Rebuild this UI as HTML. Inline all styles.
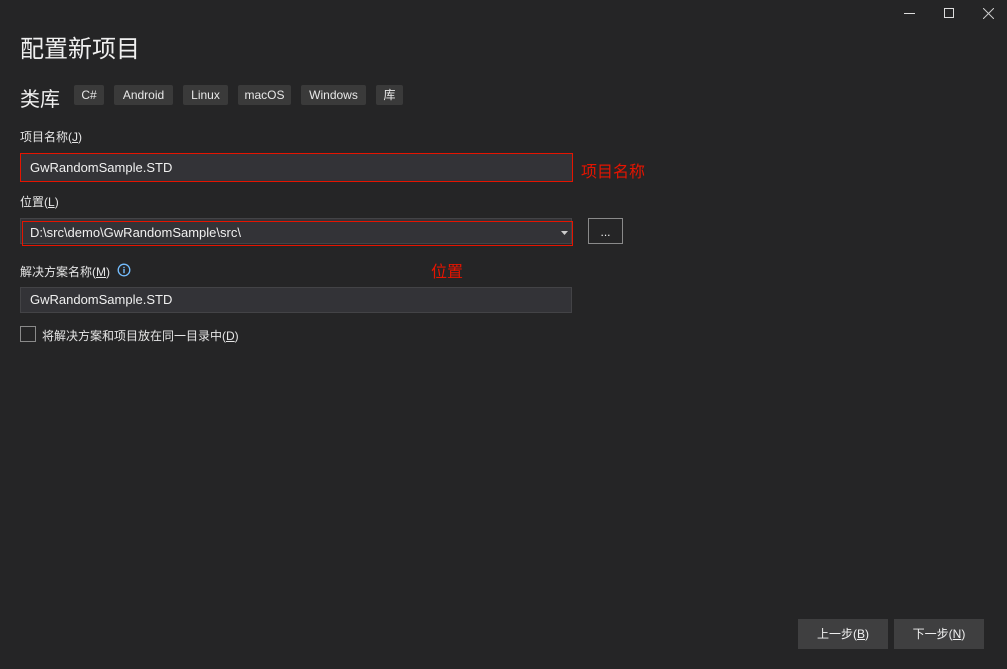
<!DOCTYPE html>
<html><head><meta charset="utf-8"><style>
*{margin:0;padding:0;box-sizing:border-box}
body{width:1007px;height:669px;background:#252526;position:relative;overflow:hidden;font-family:"Liberation Sans","Noto Sans CJK SC",sans-serif;color:#e6e6e6;font-size:12px}
.a{position:absolute}
.tag{position:absolute;top:85px;height:20px;background:#3a3a3a;border-radius:2px;font-size:12px;line-height:20px;text-align:center;color:#e8e8e8}
.inp{position:absolute;background:#333337;border:1px solid #434346;font-size:13px;color:#f0f0f0;padding-left:9px}
.red{border:1px solid #e51400}
.btn{position:absolute;top:619px;height:30px;background:#3f3f40;font-size:12px;line-height:30px;text-align:center;color:#f0f0f0}
u{text-decoration:underline}
</style></head><body>
<div class="a" style="left:904px;top:13px;width:11px;height:1px;background:#ddd"></div>
<div class="a" style="left:944px;top:8px;width:10px;height:10px;border:1px solid #ddd"></div>
<svg class="a" style="left:983px;top:8px" width="11" height="11"><path d="M0 0L11 11M11 0L0 11" stroke="#ccc" stroke-width="1"/></svg>
<div class="a" style="left:20px;top:29px;font-size:24px;color:#f0f0f0">配置新项目</div>
<div class="a" style="left:20px;top:83px;font-size:20px;color:#f0f0f0">类库</div>
<div class="tag" style="left:74px;width:30px">C#</div>
<div class="tag" style="left:114px;width:59px">Android</div>
<div class="tag" style="left:183px;width:45px">Linux</div>
<div class="tag" style="left:238px;width:53px">macOS</div>
<div class="tag" style="left:301px;width:65px">Windows</div>
<div class="tag" style="left:376px;width:27px">库</div>
<div class="a" style="left:20px;top:128px">项目名称(<u>J</u>)</div>
<div class="inp red" style="left:20px;top:153px;width:553px;height:29px;line-height:27px">GwRandomSample.STD</div>
<div class="a" style="left:581px;top:158px;font-size:16px;color:#e51400">项目名称</div>
<div class="a" style="left:20px;top:193px">位置(<u>L</u>)</div>
<div class="inp" style="left:20px;top:218px;width:552px;height:26px;padding:0"></div>
<div class="inp red" style="left:22px;top:221px;width:551px;height:25px;line-height:22px;background:transparent;padding-left:7px">D:\src\demo\GwRandomSample\src\</div>
<svg class="a" style="left:561px;top:231px" width="7" height="4"><path d="M0 0H7L3.5 4Z" fill="#ccc"/></svg>
<div class="a" style="left:588px;top:218px;width:35px;height:26px;border:1px solid #8a8a8a;text-align:center;line-height:26px;color:#eee">...</div>
<div class="a" style="left:20px;top:263px">解决方案名称(<u>M</u>)</div>
<svg class="a" style="left:117px;top:263px" width="14" height="14"><circle cx="7" cy="7" r="5.8" fill="none" stroke="#75beff" stroke-width="1.3"/><rect x="6.3" y="6" width="1.4" height="4.2" fill="#75beff"/><rect x="6.3" y="3.8" width="1.4" height="1.4" fill="#75beff"/></svg>
<div class="a" style="left:431px;top:258px;font-size:16px;color:#e51400">位置</div>
<div class="inp" style="left:20px;top:287px;width:552px;height:26px;line-height:24px">GwRandomSample.STD</div>
<div class="a" style="left:20px;top:326px;width:16px;height:16px;border:1px solid #8a8a8a"></div>
<div class="a" style="left:42px;top:327px">将解决方案和项目放在同一目录中(<u>D</u>)</div>
<div class="btn" style="left:798px;width:90px">上一步(<u>B</u>)</div>
<div class="btn" style="left:894px;width:90px">下一步(<u>N</u>)</div>
</body></html>
